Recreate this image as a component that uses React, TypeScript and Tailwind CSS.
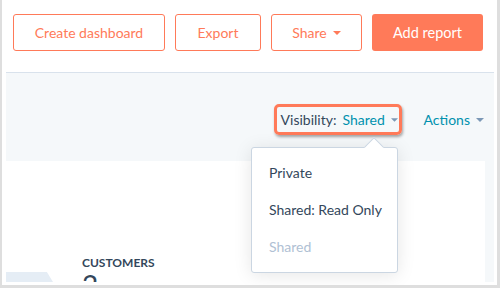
import React from "react";

function Caret({ className }: { className?: string }) {
  return (
    <svg viewBox="0 0 8 4" className={className} fill="currentColor">
      <path d="M0 0h8L4 4z" />
    </svg>
  );
}

const outlineBtn =
  "flex h-[37px] items-center justify-center rounded-[3px] border border-[#ff7a59] bg-white text-[14px] text-[#ff7a59]";

export default function App() {
  return (
    <div
      className="relative h-[288px] w-[500px] overflow-hidden border-b-[3px] border-l-2 border-r-[3px] border-[#dedede] bg-white"
      style={{ fontFamily: "Lato, 'Open Sans', sans-serif" }}
    >
      {/* top button row */}
      <div className="flex h-[72px] items-start gap-[10px] pl-[11px] pt-[14px]">
        <button type="button" className={`${outlineBtn} w-[152px]`}>
          Create dashboard
        </button>
        <button type="button" className={`${outlineBtn} w-[86px]`}>
          Export
        </button>
        <button type="button" className={`${outlineBtn} w-[91px] gap-[6px]`}>
          Share
          <Caret className="mt-[1px] h-[4px] w-[8px]" />
        </button>
        <button
          type="button"
          className="flex h-[37px] w-[111px] items-center justify-center rounded-[3px] bg-[#ff7a59] text-[14.5px] text-white"
        >
          Add report
        </button>
      </div>

      {/* dashboard panel */}
      <div className="ml-[4px] flex h-[210px] w-[488px] flex-col border-t border-[#d9e2ec] bg-[#f5f8fa]">
        <div className="flex h-[88px] items-start justify-end gap-[22px] pr-[10px] pt-[31px]">
          <div className="flex h-[31px] w-[128px] items-center whitespace-nowrap rounded-[5px] border-[3px] border-[#ff7a59] pl-[4px] text-[14px] shadow-[1px_2px_3px_rgba(0,0,0,0.35)]">
            <span className="text-[#33475b]">Visibility:</span>
            <span className="ml-[6px] text-[#0091ae]">Shared</span>
            <Caret className="ml-[6px] mt-[1px] h-[4px] w-[7px] text-[#7c98b6]" />
          </div>
          <div className="flex h-[31px] items-center gap-[6px] text-[14px] text-[#0091ae]">
            Actions
            <Caret className="mt-[1px] h-[4px] w-[8px] text-[#7c98b6]" />
          </div>
        </div>

        <div className="relative mr-[9px] flex-1 overflow-hidden bg-white">
          <div className="ml-[76px] mt-[94px] flex flex-col">
            <span className="text-[12px] font-bold leading-[16px] text-[#33475b]">
              CUSTOMERS
            </span>
            <span className="text-[28px] leading-[28px] text-[#33475b]">2</span>
          </div>
          <div className="absolute bottom-0 left-0 h-[10px] w-[47px] bg-[#e5edf5] [clip-path:polygon(0_0,87%_0,100%_100%,0_100%)]" />
        </div>
      </div>

      {/* visibility dropdown */}
      <div className="absolute left-[249px] top-[147px] h-[126px] w-[147px] rounded-[3px] border border-[#cbd6e2] bg-white pt-[6px] shadow-[0_2px_18px_rgba(0,0,0,0.1)]">
        <div className="absolute left-[115px] top-[-8px] h-[14px] w-[14px] rotate-45 border-l border-t border-[#cbd6e2] bg-white" />
        <div className="relative flex h-[37px] items-center whitespace-nowrap px-[17px] text-[14px] text-[#33475b]">
          Private
        </div>
        <div className="relative flex h-[37px] items-center whitespace-nowrap px-[17px] text-[14px] text-[#33475b]">
          Shared: Read Only
        </div>
        <div className="relative flex h-[37px] items-center whitespace-nowrap px-[17px] text-[14px] text-[#b0c1d4]">
          Shared
        </div>
      </div>
    </div>
  );
}
